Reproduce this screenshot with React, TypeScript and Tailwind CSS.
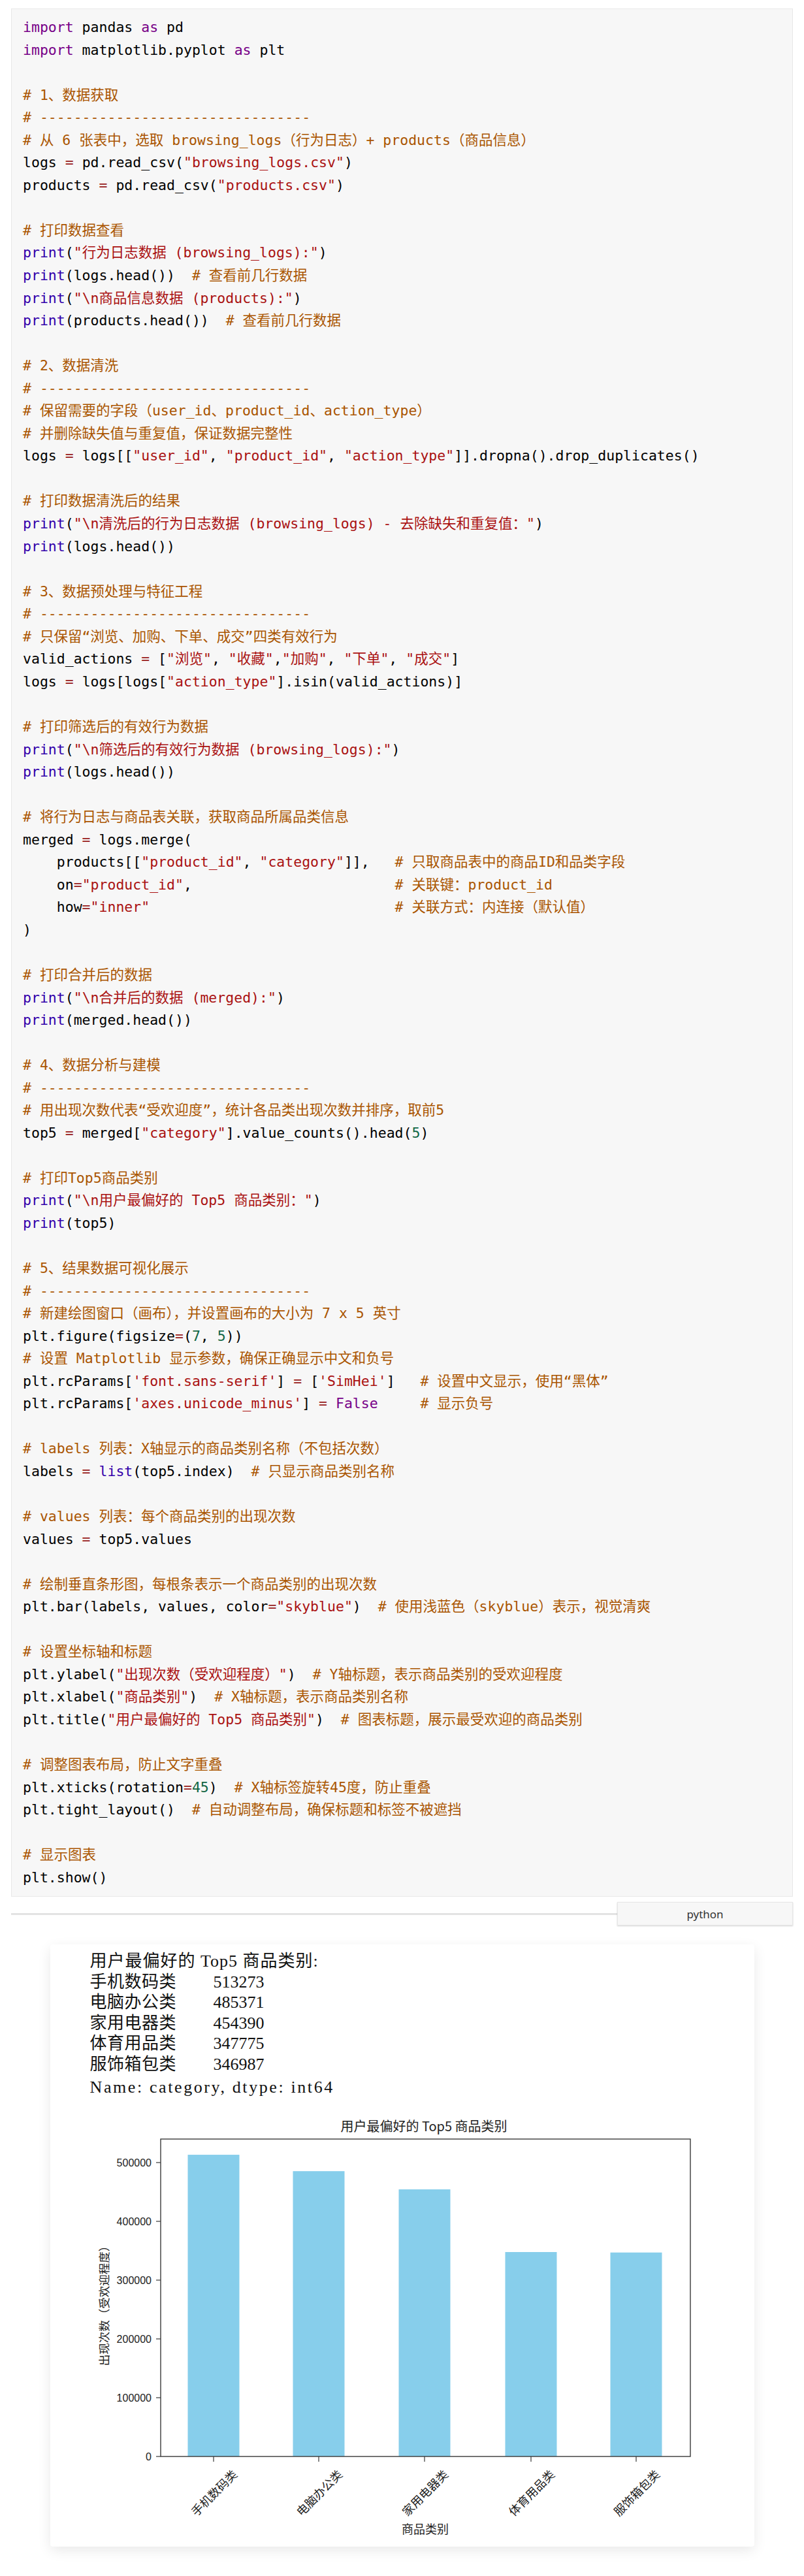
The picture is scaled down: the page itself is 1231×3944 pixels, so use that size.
import React from 'react';

const CODE = String.raw`import pandas as pd
import matplotlib.pyplot as plt

# 1、数据获取
# --------------------------------
# 从 6 张表中，选取 browsing_logs（行为日志）+ products（商品信息）
logs = pd.read_csv("browsing_logs.csv")
products = pd.read_csv("products.csv")

# 打印数据查看
print("行为日志数据 (browsing_logs):")
print(logs.head())  # 查看前几行数据
print("\n商品信息数据 (products):")
print(products.head())  # 查看前几行数据

# 2、数据清洗
# --------------------------------
# 保留需要的字段（user_id、product_id、action_type）
# 并删除缺失值与重复值，保证数据完整性
logs = logs[["user_id", "product_id", "action_type"]].dropna().drop_duplicates()

# 打印数据清洗后的结果
print("\n清洗后的行为日志数据 (browsing_logs) - 去除缺失和重复值：")
print(logs.head())

# 3、数据预处理与特征工程
# --------------------------------
# 只保留“浏览、加购、下单、成交”四类有效行为
valid_actions = ["浏览", "收藏","加购", "下单", "成交"]
logs = logs[logs["action_type"].isin(valid_actions)]

# 打印筛选后的有效行为数据
print("\n筛选后的有效行为数据 (browsing_logs):")
print(logs.head())

# 将行为日志与商品表关联，获取商品所属品类信息
merged = logs.merge(
${'    products[["product_id", "category"]],'.padEnd(44)}# 只取商品表中的商品ID和品类字段
${'    on="product_id",'.padEnd(44)}# 关联键：product_id
${'    how="inner"'.padEnd(44)}# 关联方式：内连接（默认值）
)

# 打印合并后的数据
print("\n合并后的数据 (merged):")
print(merged.head())

# 4、数据分析与建模
# --------------------------------
# 用出现次数代表“受欢迎度”，统计各品类出现次数并排序，取前5
top5 = merged["category"].value_counts().head(5)

# 打印Top5商品类别
print("\n用户最偏好的 Top5 商品类别：")
print(top5)

# 5、结果数据可视化展示
# --------------------------------
# 新建绘图窗口（画布），并设置画布的大小为 7 x 5 英寸
plt.figure(figsize=(7, 5))
# 设置 Matplotlib 显示参数，确保正确显示中文和负号
${"plt.rcParams['font.sans-serif'] = ['SimHei']".padEnd(47)}# 设置中文显示，使用“黑体”
${"plt.rcParams['axes.unicode_minus'] = False".padEnd(47)}# 显示负号

# labels 列表：X轴显示的商品类别名称（不包括次数）
labels = list(top5.index)  # 只显示商品类别名称

# values 列表：每个商品类别的出现次数
values = top5.values

# 绘制垂直条形图，每根条表示一个商品类别的出现次数
plt.bar(labels, values, color="skyblue")  # 使用浅蓝色（skyblue）表示，视觉清爽

# 设置坐标轴和标题
plt.ylabel("出现次数（受欢迎程度）")  # Y轴标题，表示商品类别的受欢迎程度
plt.xlabel("商品类别")  # X轴标题，表示商品类别名称
plt.title("用户最偏好的 Top5 商品类别")  # 图表标题，展示最受欢迎的商品类别

# 调整图表布局，防止文字重叠
plt.xticks(rotation=45)  # X轴标签旋转45度，防止重叠
plt.tight_layout()  # 自动调整布局，确保标题和标签不被遮挡

# 显示图表
plt.show()`;

// comment | string | keyword | builtin | number | operator
const TOKEN =
  /(#.*$)|("(?:[^"\\]|\\.)*"|'(?:[^'\\]|\\.)*')|\b(import|as|False|True)\b|\b(print|list)\b|\b(\d+)\b|(=)/g;

function highlight(line: string) {
  const out: React.ReactNode[] = [];
  let last = 0;
  let m: RegExpExecArray | null;
  TOKEN.lastIndex = 0;
  while ((m = TOKEN.exec(line))) {
    if (m.index > last) out.push(line.slice(last, m.index));
    const cls = m[1]
      ? 'text-[#aa5500]'
      : m[2]
        ? 'text-[#aa1111]'
        : m[3]
          ? 'text-[#770088]'
          : m[4]
            ? 'text-[#3300aa]'
            : m[5]
              ? 'text-[#116644]'
              : 'text-[#981a1a]';
    out.push(
      <span key={m.index} className={cls}>
        {m[0]}
      </span>
    );
    last = m.index + m[0].length;
  }
  if (last < line.length) out.push(line.slice(last));
  return out;
}

const top5 = [
  { name: '手机数码类', value: 513273 },
  { name: '电脑办公类', value: 485371 },
  { name: '家用电器类', value: 454390 },
  { name: '体育用品类', value: 347775 },
  { name: '服饰箱包类', value: 346987 },
];

const centers = [250, 411, 573, 736, 897];
const yOf = (v: number) => 530 - (v / 100000) * 90;

const Chart: React.FC = () => (
  <svg width={1078} height={660} viewBox="0 0 1078 660" className="block">
    <g fontFamily="'Noto Sans CJK SC', 'Liberation Sans', sans-serif" fill="#222">
      <text x={572} y={32} fontSize={20} textAnchor="middle">
        用户最偏好的 Top5 商品类别
      </text>
      {top5.map((b, i) => (
        <rect key={b.name} x={centers[i] - 39.5} y={yOf(b.value)} width={79} height={530 - yOf(b.value)} fill="#87ceeb" />
      ))}
      <rect x={169} y={44} width={811} height={486} fill="none" stroke="#3a3a3a" strokeWidth={1.4} />
      {[0, 1, 2, 3, 4, 5].map((k) => (
        <g key={k}>
          <line x1={162} x2={169} y1={530 - k * 90} y2={530 - k * 90} stroke="#3a3a3a" strokeWidth={1.2} />
          <text x={155} y={530 - k * 90 + 5.5} fontSize={16} textAnchor="end" fontFamily="'Liberation Sans', sans-serif">
            {k * 100000}
          </text>
        </g>
      ))}
      {top5.map((b, i) => (
        <g key={b.name}>
          <line x1={centers[i]} x2={centers[i]} y1={530} y2={538} stroke="#3a3a3a" strokeWidth={1.2} />
          <text
            x={centers[i]}
            y={585}
            fontSize={18}
            textAnchor="middle"
            dominantBaseline="central"
            transform={`rotate(-45 ${centers[i]} 585)`}
          >
            {b.name}
          </text>
        </g>
      ))}
      <text x={81} y={295} fontSize={17.5} textAnchor="middle" dominantBaseline="central" transform="rotate(-90 81 295)">
        出现次数（受欢迎程度）
      </text>
      <text x={574} y={648} fontSize={18} textAnchor="middle">
        商品类别
      </text>
    </g>
  </svg>
);

const App: React.FC = () => {
  const lines = CODE.split('\n');
  return (
    <div className="bg-white w-[1231px] pt-[13px] pb-[46px]">
      {/* code block */}
      <div className="mx-[17px] bg-[#f7f7f7] border border-[#e8e8e8] py-[11px] pl-[17px] overflow-hidden">
        <pre
          className="m-0 text-[21.5px] leading-[34.55px] text-black whitespace-pre"
          style={{ fontFamily: "'DejaVu Sans Mono', 'Noto Sans CJK SC', monospace" }}
        >
          {lines.map((l, i) => (
            <div key={i}>{l.length ? highlight(l) : '\u00a0'}</div>
          ))}
        </pre>
      </div>

      {/* language bar */}
      <div className="mx-[17px] mt-[8px] flex items-center">
        <div className="flex-1 h-[3px] bg-[#e3e3e3]" />
        <div className="w-[269px] h-[36px] flex items-center justify-center bg-[#f7f7f7] border border-[#e6e6e6] shadow-[0_1px_2px_rgba(0,0,0,0.18)] text-[17px] text-[#333] font-['Noto_Sans',sans-serif]">
          python
        </div>
      </div>

      {/* output card */}
      <div className="mx-auto mt-[29px] w-[1078px] bg-white rounded-[4px] shadow-[0_6px_20px_rgba(0,0,0,0.09)] pt-[10px] pb-[8px]">
        <div className="pl-[61px] text-[26px] leading-[31.5px] text-[#111] font-['Liberation_Serif','Noto_Sans_CJK_SC',serif]">
          <div className="tracking-[1px]">用户最偏好的 Top5 商品类别:</div>
          {top5.map((b) => (
            <div key={b.name} className="flex">
              <span className="w-[189px] tracking-[0.5px]">{b.name}</span>
              <span>{b.value}</span>
            </div>
          ))}
          <div className="mt-[4px] tracking-[2.6px]">Name: category, dtype: int64</div>
        </div>
        <div className="mt-[19px]">
          <Chart />
        </div>
      </div>
    </div>
  );
};

export default App;
